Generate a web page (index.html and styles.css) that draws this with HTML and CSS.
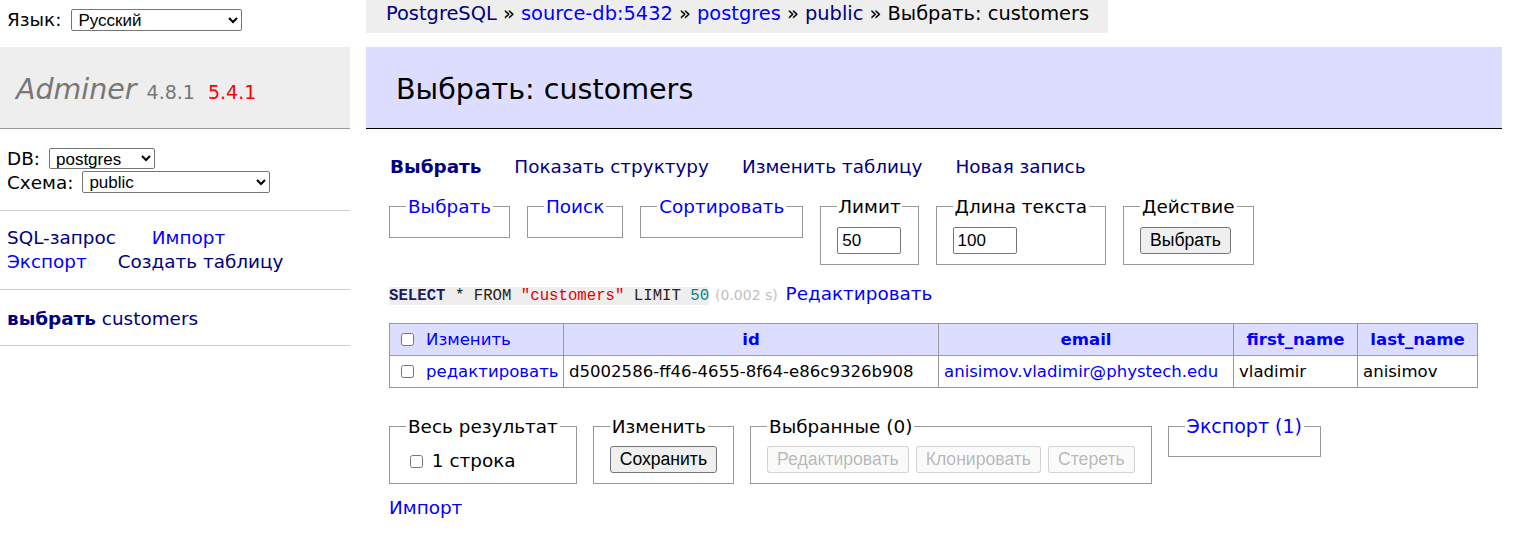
FILE: index.html
```html
<!DOCTYPE html>
<html lang="ru">
<head>
<meta charset="utf-8">
<title>Выбрать: customers - Adminer</title>
<link rel="stylesheet" href="styles.css">
</head>
<body>
<div class="page">
  <div class="lang">
    <span>Язык:</span>
    <select class="sel sel-lang"><option>Русский</option></select>
  </div>
  <div class="crumb-cell">
    <p class="breadcrumb"><a class="visited" href="#">PostgreSQL</a> » <a href="#">source-db:5432</a> » <a href="#">postgres</a> » <a class="visited" href="#">public</a> » Выбрать: customers</p>
  </div>

  <aside class="menu">
    <h1 class="logo"><a class="logo-name" href="#">Adminer</a><span class="version">4.8.1</span><span class="newver">5.4.1</span></h1>
    <div class="menu-block dbs">
      <div class="db-row"><span>DB:</span><select class="sel sel-db"><option>postgres</option></select></div>
      <div class="db-row"><span>Схема:</span><select class="sel sel-schema"><option>public</option></select></div>
    </div>
    <div class="menu-block links">
      <div class="links-row"><a class="visited" href="#">SQL-запрос</a><a href="#">Импорт</a></div>
      <div class="links-row"><a href="#">Экспорт</a><a class="visited" href="#">Создать таблицу</a></div>
    </div>
    <div class="menu-block tables">
      <a class="visited strong" href="#">выбрать</a> <a class="visited" href="#">customers</a>
    </div>
  </aside>

  <main class="content">
    <h2 class="title">Выбрать: customers</h2>
    <div class="inner">
      <nav class="nav">
        <a class="visited strong" href="#">Выбрать</a>
        <a class="visited" href="#">Показать структуру</a>
        <a class="visited" href="#">Изменить таблицу</a>
        <a class="visited" href="#">Новая запись</a>
      </nav>

      <div class="fs-row fs-top">
        <fieldset class="fs"><legend><a href="#">Выбрать</a></legend></fieldset>
        <fieldset class="fs"><legend><a href="#">Поиск</a></legend></fieldset>
        <fieldset class="fs"><legend><a href="#">Сортировать</a></legend></fieldset>
        <fieldset class="fs fs-tight"><legend>Лимит</legend><input class="txt" type="text" value="50"></fieldset>
        <fieldset class="fs"><legend>Длина текста</legend><input class="txt" type="text" value="100"></fieldset>
        <fieldset class="fs"><legend>Действие</legend><button class="btn" type="button">Выбрать</button></fieldset>
      </div>

      <p class="sql"><code class="code"><span class="kw">SELECT</span> <span class="op">*</span> <span class="kw2">FROM</span> <span class="str">"customers"</span> <span class="kw2">LIMIT</span> <span class="num">50</span></code> <span class="time">(0.002 s)</span> <a class="sql-edit" href="#">Редактировать</a></p>

      <table class="data">
        <colgroup>
          <col class="w-edit"><col class="w-id"><col class="w-email"><col class="w-first"><col class="w-last">
        </colgroup>
        <thead>
          <tr>
            <td class="th-edit"><input class="cb" type="checkbox"><a href="#">Изменить</a></td>
            <th><a href="#">id</a></th>
            <th><a href="#">email</a></th>
            <th><a href="#">first_name</a></th>
            <th><a href="#">last_name</a></th>
          </tr>
        </thead>
        <tbody>
          <tr>
            <td><input class="cb" type="checkbox"><a href="#">редактировать</a></td>
            <td>d5002586-ff46-4655-8f64-e86c9326b908</td>
            <td><a href="#">anisimov.vladimir@phystech.edu</a></td>
            <td>vladimir</td>
            <td>anisimov</td>
          </tr>
        </tbody>
      </table>

      <div class="fs-row fs-bottom">
        <fieldset class="fs"><legend>Весь результат</legend><label class="all"><input type="checkbox"> 1 строка</label></fieldset>
        <fieldset class="fs"><legend>Изменить</legend><button class="btn" type="button">Сохранить</button></fieldset>
        <fieldset class="fs"><legend>Выбранные (0)</legend>
          <div class="btns">
            <button class="btn" type="button" disabled>Редактировать</button>
            <button class="btn" type="button" disabled>Клонировать</button>
            <button class="btn" type="button" disabled>Стереть</button>
          </div>
        </fieldset>
        <fieldset class="fs fs-export"><legend><a href="#">Экспорт (1)</a></legend></fieldset>
      </div>

      <p class="import"><a href="#">Импорт</a></p>
    </div>
  </main>
</div>
</body>
</html>
```

FILE: styles.css
```css
html, body {
  margin: 0;
  padding: 0;
  background: #fff;
}

body {
  color: #000;
  font-family: "DejaVu Sans", Verdana, sans-serif;
  font-size: 18.4px;
  line-height: 23px;
}

a {
  color: #00f;
  text-decoration: none;
}

a.visited {
  color: #000080;
}

a.strong {
  font-weight: bold;
}

.page {
  display: grid;
  grid-template-columns: 366px 1136px;
  grid-template-rows: 47px auto;
}

/* language row */
.lang {
  display: flex;
  align-items: flex-start;
  gap: 10px;
  padding: 9px 7px 0;
}

.lang span {
  line-height: 22px;
}

.sel {
  font-family: "Liberation Sans", Arial, sans-serif;
  font-size: 17px;
  height: 22px;
  padding: 0 0 0 2px;
  margin: 0;
  border: 1px solid #767676;
  border-radius: 2px;
  background: #fff;
  color: #000;
}

.sel-lang { width: 171px; }
.sel-db { width: 106px; height: 21px; }
.sel-schema { width: 188px; }

/* breadcrumb */
.crumb-cell {
  display: flex;
  align-items: flex-start;
}

.breadcrumb {
  margin: 0;
  height: 33px;
  line-height: 27px;
  padding: 0 19px 0 20px;
  background: #eee;
  white-space: nowrap;
  font-size: 19.4px;
}

/* menu */
.menu {
  width: 350px;
}

.logo {
  margin: 0;
  padding: 4px 16px 0;
  box-sizing: border-box;
  height: 82px;
  display: flex;
  align-items: center;
  background: #eee;
  border-bottom: 1px solid #999;
  font-weight: normal;
  font-size: 28.5px;
  line-height: 34px;
  color: #777;
}

.logo-name {
  color: #777;
  font-style: italic;
}

.version {
  font-size: 19px;
  color: #777;
  margin-left: 10px;
  padding-top: 5px;
}

.newver {
  font-size: 19px;
  color: #f00;
  margin-left: 13px;
  padding-top: 5px;
}

.menu-block {
  border-bottom: 1px solid #ccc;
  padding-left: 7px;
}

.dbs {
  padding-top: 17px;
  padding-bottom: 16px;
}

.db-row {
  display: flex;
  align-items: center;
  gap: 9px;
  height: 24px;
}

.links {
  padding-top: 15px;
  padding-bottom: 15px;
  line-height: 24px;
}

.links-row {
  display: flex;
  gap: 36px;
}

.links-row + .links-row {
  gap: 31px;
}

.tables {
  padding-top: 17px;
  padding-bottom: 14px;
  line-height: 24px;
}

/* content */
.content {
  min-width: 0;
}

.title {
  margin: 0;
  padding: 4px 0 0 30px;
  box-sizing: border-box;
  height: 82px;
  display: flex;
  align-items: center;
  background: #ddf;
  border-bottom: 1px solid #000;
  font-weight: normal;
  font-size: 28.6px;
  color: #000;
}

.inner {
  padding-left: 23px;
}

.nav {
  margin-top: 26px;
  display: flex;
  gap: 33px;
  padding-left: 1px;
}

.fs-row {
  display: flex;
  align-items: flex-start;
  gap: 17px;
}

.fs-top {
  margin-top: 17px;
}

.fs-bottom {
  margin-top: 27px;
  gap: 16px;
}

.fs {
  margin: 0;
  padding: 8px 16px 10px;
  border: 1px solid #999;
  min-width: 0;
}

.fs-top .fs {
  padding-top: 9px;
}

.fs legend {
  padding: 0 2px;
  line-height: 23px;
}

.fs-tight legend {
  padding: 0 1px;
}

.fs-export legend {
  font-size: 19px;
}

.txt {
  display: block;
  width: 64px;
  height: 27px;
  box-sizing: border-box;
  margin: 0;
  padding: 1px 4px;
  border: 1px solid #767676;
  border-radius: 2px;
  font-family: "Liberation Sans", Arial, sans-serif;
  font-size: 17px;
  color: #000;
}

.btn {
  display: block;
  height: 27px;
  box-sizing: border-box;
  margin: 0;
  padding: 0 9px;
  border: 1px solid #767676;
  border-radius: 3px;
  background: #efefef;
  font-family: "Liberation Sans", Arial, sans-serif;
  font-size: 17.6px;
  color: #000;
}

.btn:disabled {
  color: rgba(16, 16, 16, 0.3);
  border-color: rgba(118, 118, 118, 0.3);
  background: rgba(239, 239, 239, 0.3);
}

.btns {
  display: flex;
  gap: 7px;
}

.all {
  display: block;
  line-height: 24px;
  padding-top: 3px;
}

.all input {
  vertical-align: middle;
  margin: 0 3px 2px 4px;
}

/* sql line */
.sql {
  margin: 17px 0 0;
}

.code {
  font-family: "Liberation Mono", "Courier New", monospace;
  font-size: 15.7px;
  background: #eee;
  color: #222;
}

.code .kw {
  font-weight: bold;
  color: #1d1d5c;
}

.code .kw2 {
  color: #2b2310;
}

.code .op {
  color: #111;
}

.code .str {
  color: #e20000;
}

.code .num {
  color: #088;
}

.time {
  color: silver;
  font-size: 14px;
}

.sql-edit {
  margin-left: 2px;
}

/* data table */
.data {
  margin-top: 15px;
  border-collapse: collapse;
  table-layout: fixed;
  width: 1088px;
  font-size: 16.56px;
}

.w-edit { width: 174px; }
.w-id { width: 375px; }
.w-email { width: 295px; }
.w-first { width: 124px; }
.w-last { width: 120px; }

.data td,
.data th {
  border: 1px solid #999;
  padding: 5px 5px;
  line-height: 21px;
  white-space: nowrap;
  overflow: hidden;
  text-align: left;
}

.data thead td,
.data thead th {
  background: #ddf;
}

.data thead th {
  text-align: center;
  font-weight: bold;
}

.cb {
  margin: 0 12px 0 6px;
  vertical-align: -1px;
}

.import {
  margin: 12px 0 0;
}
```
